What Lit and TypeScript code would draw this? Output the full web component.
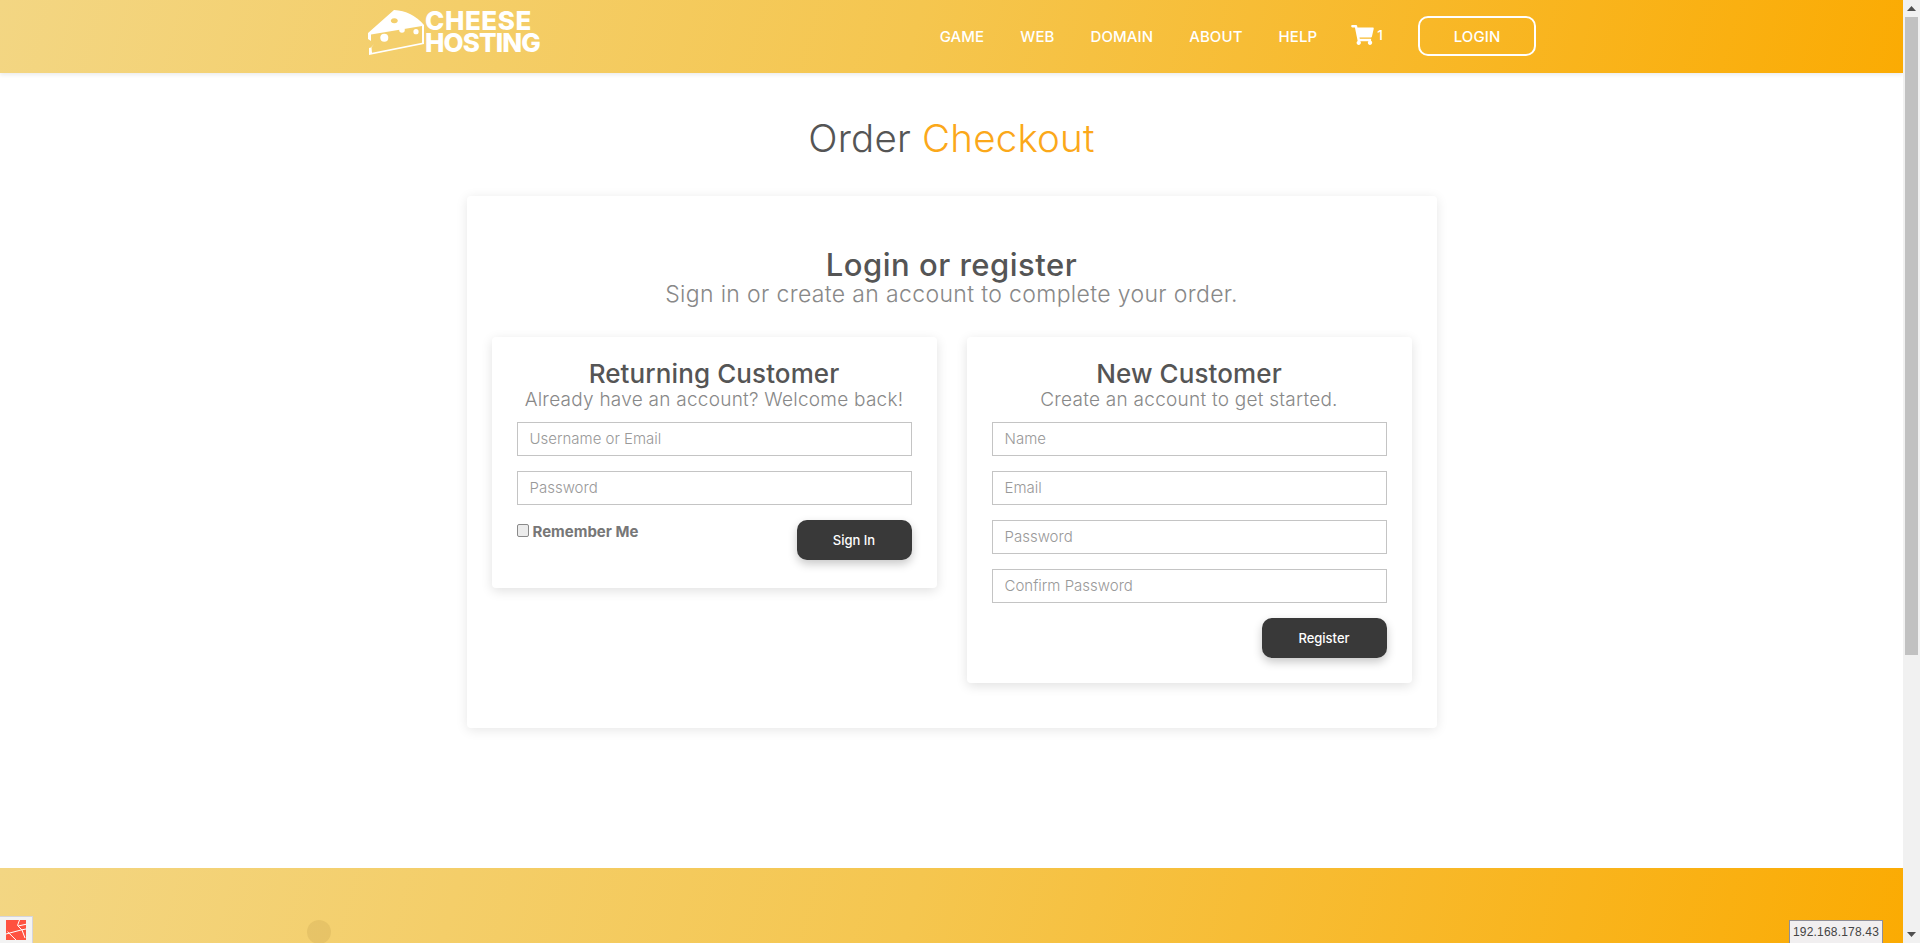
import { LitElement, html, css } from "lit";
import { customElement } from "lit/decorators.js";

const NAV = ["GAME", "WEB", "DOMAIN", "ABOUT", "HELP"];
const CART =
  "M528.12 301.319l47.273-208C578.806 78.301 567.391 64 551.99 64H159.208l-9.166-44.81C147.758 8.021 137.93 0 126.529 0H24C10.745 0 0 10.745 0 24v16c0 13.255 10.745 24 24 24h69.883l70.248 343.435C147.325 417.1 136 435.222 136 456c0 30.928 25.072 56 56 56s56-25.072 56-56c0-15.674-6.447-29.835-16.824-40h209.647C430.447 426.165 424 440.326 424 456c0 30.928 25.072 56 56 56s56-25.072 56-56c0-22.172-12.888-41.332-31.579-50.405l5.517-24.276c3.413-15.018-8.002-29.319-23.403-29.319H218.117l-6.545-32h293.145c11.206 0 20.92-7.754 23.403-18.681z";

@customElement("app-root")
export class AppRoot extends LitElement {
  static styles = css`
    :host {
      display: flex;
      height: 943px;
      overflow: hidden;
      position: relative;
      background: #fff;
      font-family: Inter, "Liberation Sans", sans-serif;
      color: #555;
    }
    * {
      box-sizing: border-box;
    }
    .page {
      flex: 1;
      min-width: 0;
      display: flex;
      flex-direction: column;
    }
    .topbar {
      height: 73px;
      flex: none;
      padding: 0 367px;
      display: flex;
      align-items: center;
      background: linear-gradient(105deg, #f3d683 0%, #f5c64f 48%, #fbab03 100%);
      box-shadow: 0 2px 4px rgba(0, 0, 0, 0.08);
      color: #fff;
    }
    .logo {
      display: flex;
      align-items: center;
      margin-top: -9px;
    }
    .logo svg {
      flex: none;
      margin-right: -1px;
    }
    .logo-text {
      font-weight: 800;
      font-size: 26px;
      line-height: 22px;
    }
    .logo-text div {
      height: 22px;
      white-space: nowrap;
    }
    .l1 {
      letter-spacing: 0.55px;
    }
    .l2 {
      letter-spacing: -0.9px;
    }
    .nav {
      margin-left: auto;
      display: flex;
      align-items: center;
      gap: 36px;
      font-size: 15px;
      font-weight: 500;
      letter-spacing: 0.1px;
    }
    .nav a {
      margin-top: -1px;
    }
    .cart {
      display: flex;
      align-items: center;
      gap: 3px;
      font-size: 13.5px;
      margin-top: -3px;
      margin-left: -2px;
      margin-right: -1px;
    }
    .login {
      width: 118px;
      height: 40px;
      border: 2px solid #fff;
      border-radius: 10px;
      display: flex;
      align-items: center;
      justify-content: center;
      margin-top: -1px;
    }
    main {
      flex: none;
      height: 795px;
      display: flex;
      flex-direction: column;
      align-items: center;
    }
    h1 {
      margin: 45px 0 0;
      height: 78px;
      font-size: 38.5px;
      line-height: 40px;
      font-weight: 300;
      letter-spacing: 0.2px;
      color: #555;
    }
    h1 span {
      color: #fba81a;
    }
    .card {
      width: 970px;
      height: 532px;
      padding: 52px 25px 0;
      border-radius: 4px;
      background: #fff;
      box-shadow: 0 2px 12px rgba(0, 0, 0, 0.1);
    }
    .head {
      text-align: center;
    }
    h2 {
      margin: 0;
      font-size: 31px;
      line-height: 34px;
      font-weight: 500;
      letter-spacing: 0.5px;
      color: #555;
    }
    .sub {
      font-size: 23px;
      line-height: 25px;
      font-weight: 300;
      letter-spacing: 0.35px;
      color: #888;
    }
    .cols {
      display: flex;
      align-items: flex-start;
      gap: 30px;
      margin-top: 30px;
    }
    .box {
      flex: 1;
      padding: 22px 25px 25px;
      border-radius: 4px;
      background: #fff;
      box-shadow: 0 3px 12px rgba(0, 0, 0, 0.12);
    }
    h3 {
      margin: 0;
      font-size: 26px;
      line-height: 30px;
      font-weight: 500;
      letter-spacing: 0.1px;
      text-align: center;
      color: #555;
    }
    .hint {
      font-size: 19px;
      line-height: 21px;
      font-weight: 300;
      letter-spacing: 0.25px;
      text-align: center;
      color: #888;
      margin-bottom: 12px;
    }
    input.field {
      display: block;
      width: 100%;
      height: 34px;
      margin-bottom: 15px;
      padding: 0 12px 1px;
      border: 1px solid #c4c4c4;
      background: #fff;
      font: 300 15px Inter, "Liberation Sans", sans-serif;
    }
    input.field::placeholder {
      color: #999;
      opacity: 1;
    }
    .foot {
      display: flex;
      justify-content: space-between;
      align-items: flex-start;
    }
    .foot.end {
      justify-content: flex-end;
    }
    label {
      display: flex;
      align-items: flex-start;
      gap: 4px;
      font-size: 15px;
      font-weight: 700;
      line-height: 20px;
      margin-top: 2px;
      color: #777;
    }
    label input {
      appearance: none;
      width: 12px;
      height: 13px;
      margin: 2px 0 0;
      border: 1px solid #8a8a8a;
      border-radius: 2px;
      background: #ececec;
    }
    button {
      height: 40px;
      border: none;
      border-radius: 10px;
      background: #393939;
      color: #fff;
      font: 500 13px Inter, "Liberation Sans", sans-serif;
      box-shadow: 0 4px 10px rgba(0, 0, 0, 0.22);
    }
    .sign {
      width: 115px;
      margin-bottom: 3px;
    }
    .reg {
      width: 125px;
    }
    .bottom {
      flex: 1;
      position: relative;
      background: linear-gradient(105deg, #f3d683 0%, #f5c64f 48%, #fbab03 100%);
    }
    .dot {
      position: absolute;
      left: 307px;
      top: 52px;
      width: 24px;
      height: 24px;
      border-radius: 50%;
      background: rgba(120, 90, 30, 0.1);
    }
    .debug {
      position: absolute;
      left: 0;
      bottom: 0;
      width: 33px;
      height: 27px;
      display: flex;
      align-items: flex-start;
      justify-content: center;
      padding: 3px 0 0 0;
      background: #f3f3f3;
      border: 1px solid #d5d5dc;
      border-left: none;
      border-bottom: none;
    }
    .ip {
      position: absolute;
      right: 37px;
      bottom: 0;
      width: 94px;
      height: 23px;
      display: flex;
      align-items: center;
      justify-content: center;
      background: #f1eff0;
      border: 1px solid #8f8f99;
      border-bottom: none;
      font: 12px "Liberation Sans", sans-serif;
      letter-spacing: 0.2px;
      color: #444;
    }
    .scrollbar {
      width: 17px;
      flex: none;
      display: flex;
      flex-direction: column;
      align-items: center;
      background: #f1f1f1;
    }
    .arrow {
      width: 17px;
      height: 17px;
      flex: none;
      display: flex;
      align-items: center;
      justify-content: center;
    }
    .thumb {
      width: 13px;
      height: 638px;
      flex: none;
      background: #c1c1c1;
    }
    .grow {
      flex: 1;
    }
  `;

  private _box(title: string, hint: string, fields: string[], foot: unknown) {
    return html`
      <section class="box">
        <h3>${title}</h3>
        <div class="hint">${hint}</div>
        ${fields.map(
          (f) => html`<input class="field" type="text" placeholder=${f} />`,
        )}
        ${foot}
      </section>
    `;
  }

  render() {
    return html`
      <div class="page">
        <header class="topbar">
          <div class="logo">
            <svg width="59" height="47" viewBox="0 0 59 47">
              <path
                fill="#fff"
                fill-rule="evenodd"
                d="M1 24 27 1Q45 2 57 16V35L2 46V39L4 38.5 7 35 4 32 1 30Z
                   M4 25.5V32L7 35 4.5 38.5 5 43.7 55 33.7V17Z
                   M27.3 9.2a3.5 2.5 0 1 0 .01 0Z"
              />
              <circle cx="17.3" cy="28.7" r="4" fill="#fff" />
              <circle cx="49" cy="22.7" r="2.6" fill="#fff" />
              <circle cx="35" cy="21" r="2.8" fill="#fff" />
            </svg>
            <div class="logo-text">
              <div class="l1">CHEESE</div>
              <div class="l2">HOSTING</div>
            </div>
          </div>
          <nav class="nav">
            ${NAV.map((n) => html`<a>${n}</a>`)}
            <span class="cart">
              <svg width="23" height="20" viewBox="0 0 576 512">
                <path fill="#fff" d=${CART} />
              </svg>
              1
            </span>
            <span class="login">LOGIN</span>
          </nav>
        </header>

        <main>
          <h1>Order <span>Checkout</span></h1>
          <div class="card">
            <div class="head">
              <h2>Login or register</h2>
              <div class="sub">Sign in or create an account to complete your order.</div>
            </div>
            <div class="cols">
              ${this._box(
                "Returning Customer",
                "Already have an account? Welcome back!",
                ["Username or Email", "Password"],
                html`<div class="foot">
                  <label><input type="checkbox" />Remember Me</label>
                  <button class="sign">Sign In</button>
                </div>`,
              )}
              ${this._box(
                "New Customer",
                "Create an account to get started.",
                ["Name", "Email", "Password", "Confirm Password"],
                html`<div class="foot end">
                  <button class="reg">Register</button>
                </div>`,
              )}
            </div>
          </div>
        </main>

        <footer class="bottom">
          <div class="dot"></div>
        </footer>
      </div>

      <div class="scrollbar">
        <div class="arrow">
          <svg width="9" height="5" viewBox="0 0 9 5"><path fill="#505050" d="M4.5 0 9 5H0z" /></svg>
        </div>
        <div class="thumb"></div>
        <div class="grow"></div>
        <div class="arrow">
          <svg width="9" height="5" viewBox="0 0 9 5"><path fill="#505050" d="M0 0h9L4.5 5z" /></svg>
        </div>
      </div>

      <div class="debug">
        <svg width="20" height="20" viewBox="0 0 20 20">
          <path fill="#ff5240" d="M0 0h20v20H0z" />
          <path
            stroke="#fff"
            stroke-width="1"
            fill="none"
            d="M0 14 15 10 20 9M12 6 20 4.3M1.5 11.7 10 20M13.5 0 11.5 5.5 16 10 19 18"
          />
        </svg>
      </div>
      <div class="ip">192.168.178.43</div>
    `;
  }
}
